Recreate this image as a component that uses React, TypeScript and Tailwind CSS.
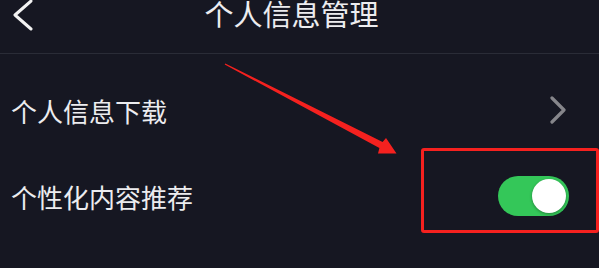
const cjk = { fontFamily: '"Noto Sans CJK SC", "Noto Sans", sans-serif' };

function Toggle({ on }: { on: boolean }) {
  return (
    <div className={`flex h-[40px] w-[71px] items-center rounded-full px-[3px] ${on ? 'justify-end bg-[#34c759]' : 'justify-start bg-[#3a3a3c]'}`}>
      <div className="h-[34px] w-[34px] rounded-full bg-white shadow-[0_1px_3px_rgba(0,0,0,0.35)]" />
    </div>
  );
}

export default function App() {
  return (
    <div className="relative h-[268px] w-[599px] overflow-hidden bg-[#161722] text-[#ececef]" style={cjk}>
      {/* header */}
      <div className="flex h-[54px] items-start border-b border-[#2a2c37]">
        <svg className="shrink-0" width="40" height="32" viewBox="0 0 40 32" fill="none">
          <path d="M31 1 L15 15 L31 29" stroke="#f2f2f2" strokeWidth="3" strokeLinecap="round" strokeLinejoin="round" />
        </svg>
        <div className="mt-[-1px] flex-1 pr-[56px] text-center text-[29px] leading-[28px]">个人信息管理</div>
      </div>

      {/* rows */}
      <div className="pt-[13px]">
        <div className="flex h-[86px] items-center justify-between pl-[11px] pr-[31px]">
          <span className="text-[26px]">个人信息下载</span>
          <svg width="20" height="28" viewBox="0 0 20 28" fill="none">
            <path d="M4 2 L16 14 L4 26" stroke="#86868b" strokeWidth="3.2" strokeLinecap="round" strokeLinejoin="round" />
          </svg>
        </div>
        <div className="flex h-[86px] items-center justify-between pl-[11px] pr-[30px]">
          <span className="text-[26px]">个性化内容推荐</span>
          <Toggle on />
        </div>
      </div>

      {/* annotation */}
      <div className="absolute left-[421px] top-[148px] h-[85px] w-[178px] rounded-[3px] border-[3px] border-[#f5211f]" />
      <svg className="absolute left-0 top-0" width="599" height="268" viewBox="0 0 599 268">
        <polygon
          points="225.3,63.5 382.6,141.9 386,138 396.5,153.5 378,153.5 379.4,148.1 224.7,64.5"
          fill="#f5211f"
        />
      </svg>
    </div>
  );
}
